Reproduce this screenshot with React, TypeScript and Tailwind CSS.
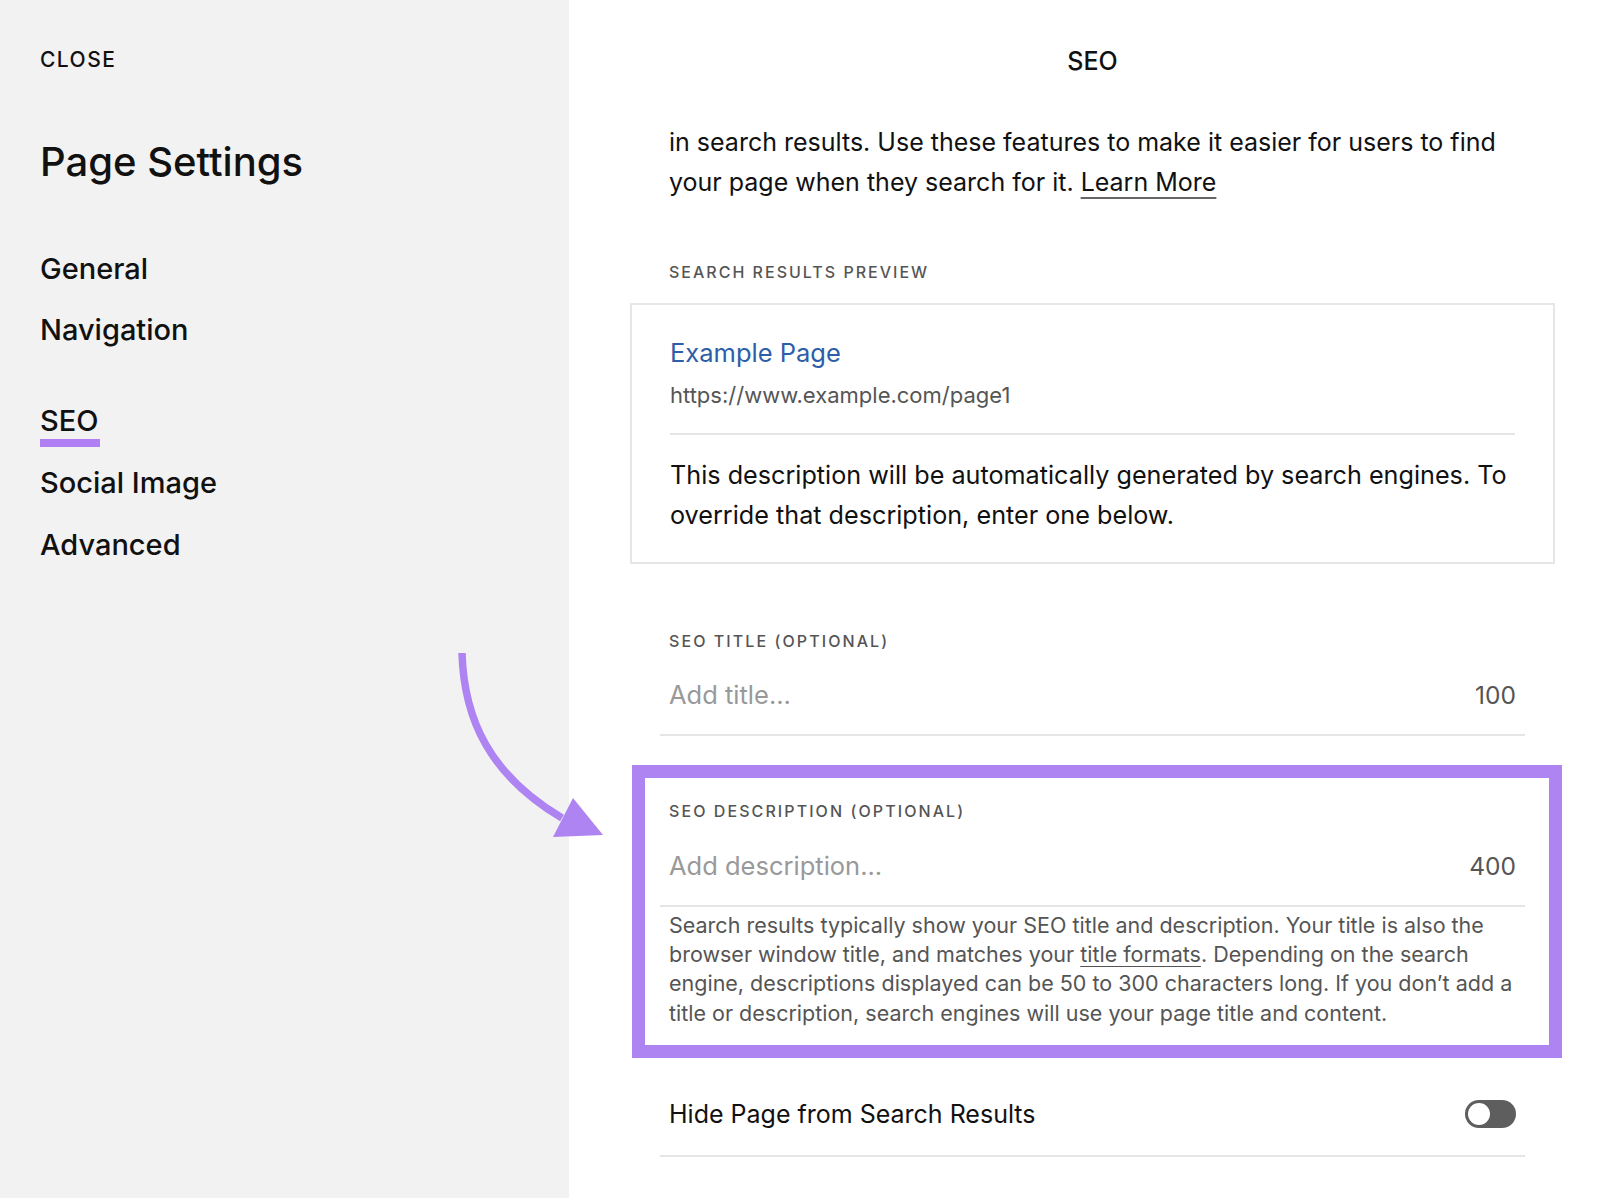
export default function App() {
  const navItems = [
    { name: 'General', cls: 'mt-[65px]' },
    { name: 'Navigation', cls: 'mt-[25px]' },
  ];
  const navItems2 = [
    { name: 'Social Image', cls: 'mt-[18px]' },
    { name: 'Advanced', cls: 'mt-[26px]' },
  ];

  return (
    <div className="relative flex w-[1600px] h-[1198px] overflow-hidden font-['Inter',sans-serif] text-[#111]">
      {/* Sidebar */}
      <aside className="w-[569px] shrink-0 bg-[#f2f2f2] pl-[40px]">
        <div className="mt-[48px] text-[21px] leading-[24px] font-medium tracking-[0.07em]">CLOSE</div>
        <h1 className="mt-[66px] text-[40px] leading-[48px] font-medium">Page Settings</h1>
        {navItems.map((item) => (
          <div key={item.name} className={`${item.cls} text-[29px] leading-[36px] font-medium`}>
            {item.name}
          </div>
        ))}
        <div className="mt-[55px] inline-block">
          <div className="text-[29px] leading-[36px] font-medium">SEO</div>
          <div className="h-[8px] w-[60px] bg-[#b07ff3]" />
        </div>
        {navItems2.map((item) => (
          <div key={item.name} className={`${item.cls} text-[29px] leading-[36px] font-medium`}>
            {item.name}
          </div>
        ))}
      </aside>

      {/* Main panel */}
      <main className="flex-1 bg-white pl-[91px] pr-[75px]">
        <div className="pt-[46px] text-center text-[25px] leading-[30px] font-medium">SEO</div>

        <p className="mt-[46px] pl-[9px] text-[25px] leading-[40px] text-[#111]">
          in search results. Use these features to make it easier for users to find your page when they search for
          it.{' '}
          <span className="underline decoration-[#666] decoration-[1.5px] underline-offset-[6px]">Learn More</span>
        </p>

        <div className="mt-[60px] pl-[9px] text-[16px] leading-[20px] font-medium tracking-[0.125em] text-[#555]">
          SEARCH RESULTS PREVIEW
        </div>

        {/* Preview box */}
        <div className="-mx-[30px] mt-[21px] border-2 border-[#e6e6e6] px-[38px] pt-[32px] pb-[27px]">
          <div className="text-[25.5px] leading-[32px] text-[#2d5ea8]">Example Page</div>
          <div className="mt-[13px] text-[22px] leading-[26px] text-[#555]">https://www.example.com/page1</div>
          <div className="mt-[25px] h-[2px] bg-[#e5e5e5]" />
          <p className="mt-[21px] text-[25.2px] leading-[39.5px] text-[#111]">
            This description will be automatically generated by search engines. To override that description, enter
            one below.
          </p>
        </div>

        {/* SEO title */}
        <div className="mt-[67px] pl-[9px] text-[16px] leading-[20px] font-medium tracking-[0.13em] text-[#555]">
          SEO TITLE (OPTIONAL)
        </div>
        <div className="mt-[28px] flex items-center justify-between border-b-2 border-[#e5e5e5] pb-[23px] pl-[9px] pr-[9px] leading-[32px]">
          <span className="text-[25.5px] text-[#999]">Add title...</span>
          <span className="text-[24.5px] text-[#555]">100</span>
        </div>

        {/* SEO description, highlighted */}
        <div className="-ml-[28px] -mr-[37px] mt-[29px] border-[13px] border-[#ae84f2] pl-[15px] pr-[24px] pt-[23px] pb-[17px]">
          <div className="pl-[9px] text-[16px] leading-[20px] font-medium tracking-[0.13em] text-[#555]">
            SEO DESCRIPTION (OPTIONAL)
          </div>
          <div className="mt-[29px] flex items-center justify-between border-b-2 border-[#e5e5e5] pb-[23px] pl-[9px] pr-[9px] leading-[32px]">
            <span className="text-[25.5px] text-[#999]">Add description...</span>
            <span className="text-[24.5px] text-[#555]">400</span>
          </div>
          <p className="mt-[4px] pl-[9px] text-[21.5px] leading-[29.2px] text-[#555]">
            Search results typically show your SEO title and description. Your title is also the browser window title,
            and matches your{' '}
            <span className="underline decoration-[1px] underline-offset-[4px]">title formats</span>. Depending on the
            search engine, descriptions displayed can be 50 to 300 characters long. If you don’t add a title or
            description, search engines will use your page title and content.
          </p>
        </div>

        {/* Hide page toggle */}
        <div className="mt-[40px] flex items-center justify-between border-b-2 border-[#e5e5e5] pb-[25px] pl-[9px] pr-[9px]">
          <span className="text-[25px] leading-[32px] text-[#111]">Hide Page from Search Results</span>
          <div className="flex h-[28px] w-[51px] items-center rounded-full bg-[#5e5e5e] p-[3px]">
            <div className="h-[22px] w-[22px] rounded-full bg-white" />
          </div>
        </div>
      </main>

      {/* Annotation arrow */}
      <svg
        className="absolute left-[440px] top-[640px] h-[210px] w-[180px]"
        viewBox="440 640 180 210"
        fill="none"
      >
        <path d="M462 653 C 464 720, 490 775, 562 818" stroke="#ae84f2" strokeWidth="7.5" strokeLinecap="butt" />
        <polygon points="553,837 603,835 573,798" fill="#ae84f2" />
      </svg>
    </div>
  );
}
